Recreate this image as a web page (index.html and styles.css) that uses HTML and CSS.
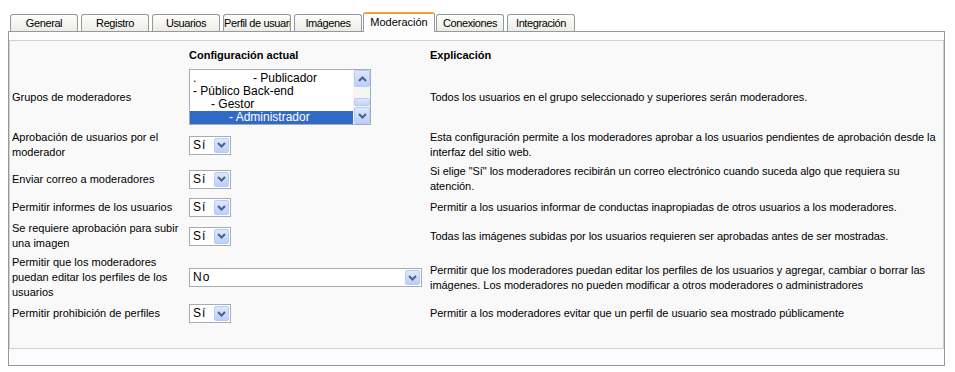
FILE: index.html
```html
<!DOCTYPE html>
<html lang="es">
<head>
    <meta charset="UTF-8">
    <title>Configuración - Moderación</title>
    <link rel="stylesheet" href="styles.css">
</head>
<body>
    <div class="tabs">
        <div class="tab">General</div>
        <div class="tab">Registro</div>
        <div class="tab">Usuarios</div>
        <div class="tab">Perfil de usuario</div>
        <div class="tab">Imágenes</div>
        <div class="tab active">Moderación</div>
        <div class="tab">Conexiones</div>
        <div class="tab">Integración</div>
    </div>

    <div class="panel">
        <div class="content">
            <table class="settings">
                <colgroup>
                    <col class="col-label">
                    <col class="col-value">
                    <col>
                </colgroup>
                <thead>
                    <tr>
                        <th></th>
                        <th>Configuración actual</th>
                        <th>Explicación</th>
                    </tr>
                </thead>
                <tbody>
                    <tr>
                        <td>Grupos de moderadores</td>
                        <td>
                            <div class="listbox">
                                <ul class="options">
                                    <li><span class="dot">.</span>- Publicador</li>
                                    <li>- Público Back-end</li>
                                    <li class="lvl1">- Gestor</li>
                                    <li class="lvl2 selected">- Administrador</li>
                                </ul>
                                <div class="scrollbar">
                                    <span class="sb-btn">
                                        <svg width="9" height="6" viewBox="0 0 9 6"><polyline points="1,5 4.5,1.5 8,5" fill="none" stroke="#4d6185" stroke-width="2"/></svg>
                                    </span>
                                    <span class="sb-track"><span class="sb-thumb"></span></span>
                                    <span class="sb-btn">
                                        <svg width="9" height="6" viewBox="0 0 9 6"><polyline points="1,1 4.5,4.5 8,1" fill="none" stroke="#4d6185" stroke-width="2"/></svg>
                                    </span>
                                </div>
                            </div>
                        </td>
                        <td class="desc">Todos los usuarios en el grupo seleccionado y superiores serán moderadores.</td>
                    </tr>
                    <tr>
                        <td>Aprobación de usuarios por el moderador</td>
                        <td>
                            <div class="select">
                                <span class="select-value">Sí</span>
                                <span class="select-arrow"><svg width="9" height="6" viewBox="0 0 9 6"><polyline points="1,1 4.5,4.5 8,1" fill="none" stroke="#4d6185" stroke-width="2"/></svg></span>
                            </div>
                        </td>
                        <td class="desc">Esta configuración permite a los moderadores aprobar a los usuarios pendientes de aprobación desde la<br>interfaz del sitio web.</td>
                    </tr>
                    <tr>
                        <td>Enviar correo a moderadores</td>
                        <td>
                            <div class="select">
                                <span class="select-value">Sí</span>
                                <span class="select-arrow"><svg width="9" height="6" viewBox="0 0 9 6"><polyline points="1,1 4.5,4.5 8,1" fill="none" stroke="#4d6185" stroke-width="2"/></svg></span>
                            </div>
                        </td>
                        <td class="desc">Si elige "Sí" los moderadores recibirán un correo electrónico cuando suceda algo que requiera su<br>atención.</td>
                    </tr>
                    <tr>
                        <td>Permitir informes de los usuarios</td>
                        <td>
                            <div class="select">
                                <span class="select-value">Sí</span>
                                <span class="select-arrow"><svg width="9" height="6" viewBox="0 0 9 6"><polyline points="1,1 4.5,4.5 8,1" fill="none" stroke="#4d6185" stroke-width="2"/></svg></span>
                            </div>
                        </td>
                        <td class="desc">Permitir a los usuarios informar de conductas inapropiadas de otros usuarios a los moderadores.</td>
                    </tr>
                    <tr>
                        <td>Se requiere aprobación para subir una imagen</td>
                        <td>
                            <div class="select">
                                <span class="select-value">Sí</span>
                                <span class="select-arrow"><svg width="9" height="6" viewBox="0 0 9 6"><polyline points="1,1 4.5,4.5 8,1" fill="none" stroke="#4d6185" stroke-width="2"/></svg></span>
                            </div>
                        </td>
                        <td class="desc">Todas las imágenes subidas por los usuarios requieren ser aprobadas antes de ser mostradas.</td>
                    </tr>
                    <tr>
                        <td>Permitir que los moderadores puedan editar los perfiles de los usuarios</td>
                        <td>
                            <div class="select wide">
                                <span class="select-value">No</span>
                                <span class="select-arrow"><svg width="9" height="6" viewBox="0 0 9 6"><polyline points="1,1 4.5,4.5 8,1" fill="none" stroke="#4d6185" stroke-width="2"/></svg></span>
                            </div>
                        </td>
                        <td class="desc">Permitir que los moderadores puedan editar los perfiles de los usuarios y agregar, cambiar o borrar las<br>imágenes. Los moderadores no pueden modificar a otros moderadores o administradores</td>
                    </tr>
                    <tr>
                        <td>Permitir prohibición de perfiles</td>
                        <td>
                            <div class="select">
                                <span class="select-value">Sí</span>
                                <span class="select-arrow"><svg width="9" height="6" viewBox="0 0 9 6"><polyline points="1,1 4.5,4.5 8,1" fill="none" stroke="#4d6185" stroke-width="2"/></svg></span>
                            </div>
                        </td>
                        <td class="desc">Permitir a los moderadores evitar que un perfil de usuario sea mostrado públicamente</td>
                    </tr>
                </tbody>
            </table>
        </div>
        <div class="panel-footer"></div>
    </div>
</body>
</html>
```

FILE: styles.css
```css
* {
    margin: 0;
    padding: 0;
    box-sizing: border-box;
}

body {
    font-family: 'Liberation Sans', Arial, sans-serif;
    font-size: 11px;
    color: #000;
    background-color: #fff;
}

/* タブ */
.tabs {
    display: flex;
    align-items: flex-end;
    padding: 12px 0 0 10px;
}

.tab {
    width: 68px;
    height: 17px;
    margin-right: 3px;
    border: 1px solid #919b9c;
    border-bottom: none;
    border-radius: 3px 3px 0 0;
    background: linear-gradient(#fefefe, #ecebe5);
    text-align: center;
    line-height: 16px;
    letter-spacing: -0.4px;
    white-space: nowrap;
    overflow: hidden;
}

.tab.active {
    position: relative;
    z-index: 1;
    width: 72px;
    height: 20px;
    margin: 0 1px -1px -2px;
    border-top: 2px solid #f0a33a;
    background: #fff;
    line-height: 16px;
    letter-spacing: 0;
}

/* パネル */
.panel {
    margin: 0 10px 0 8px;
    padding-top: 8px;
    border: 1px solid #919b9c;
    background-color: #fcfcfe;
}

.content {
    height: 309px;
    border: 1px solid #d0d0d0;
    background-color: #f9f9f9;
}

.panel-footer {
    height: 16px;
}

.settings {
    width: 100%;
    margin-top: 3px;
    border-collapse: collapse;
    table-layout: fixed;
}

.col-label {
    width: 176px;
}

.col-value {
    width: 241px;
}

.settings th {
    text-align: left;
    font-weight: bold;
    line-height: 15px;
    padding: 4px 3px 3px 3px;
}

.settings td {
    line-height: 15px;
    padding: 2px 3px;
    vertical-align: middle;
}

.settings td:first-child {
    padding-left: 2px;
}

.settings .desc {
    white-space: nowrap;
    letter-spacing: -0.05px;
}

/* リストボックス */
.listbox {
    display: flex;
    width: 182px;
    height: 56px;
    margin: 1px 0;
    border: 1px solid #a5acb2;
    background: #fff;
    font-size: 12px;
}

.options {
    flex: 1;
    list-style: none;
    padding-top: 2px;
    overflow: hidden;
}

.options li {
    line-height: 13px;
    padding-left: 3px;
    white-space: nowrap;
}

.options .dot {
    display: inline-block;
    width: 60px;
}

.options .lvl1 {
    padding-left: 21px;
}

.options .lvl2 {
    padding-left: 39px;
}

.options .selected {
    background-color: #316ac5;
    color: #fff;
}

.scrollbar {
    width: 17px;
    display: flex;
    flex-direction: column;
    background-color: #f5f5f1;
}

.sb-btn {
    height: 17px;
    margin-left: 1px;
    display: flex;
    align-items: center;
    justify-content: center;
    border: 1px solid #b8cbf3;
    border-radius: 2px;
    background: linear-gradient(#dde8fe, #bccff9);
}

.sb-track {
    flex: 1;
    display: flex;
    flex-direction: column;
    justify-content: flex-end;
    padding: 0 0 1px 1px;
}

.sb-thumb {
    height: 8px;
    border: 1px solid #b8cbf3;
    border-radius: 2px;
    background: linear-gradient(#dde8fe, #c3d4fa);
}

/* セレクト */
.select {
    display: flex;
    align-items: center;
    width: 42px;
    height: 19px;
    border: 1px solid #a5acb2;
    background: #fff;
    font-size: 12px;
}

.select.wide {
    width: 233px;
}

.select-value {
    flex: 1;
    padding-left: 3px;
    letter-spacing: 1px;
    line-height: 17px;
}

.select-arrow {
    width: 15px;
    height: 15px;
    margin: 1px;
    display: flex;
    align-items: center;
    justify-content: center;
    border: 1px solid #b8cbf3;
    border-radius: 2px;
    background: linear-gradient(#dde8fe, #bccff9);
}
```
